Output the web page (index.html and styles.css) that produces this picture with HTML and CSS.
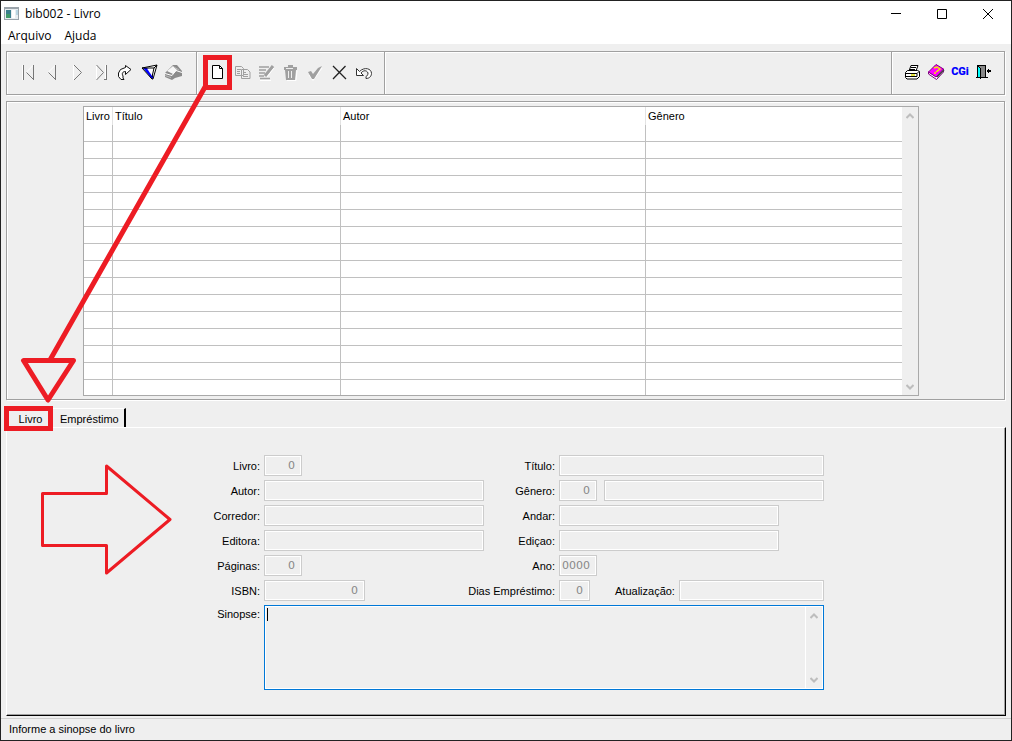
FILE: index.html
```html
<!DOCTYPE html>
<html lang="pt-BR">
<head>
<meta charset="utf-8">
<title>bib002 - Livro</title>
<link rel="stylesheet" href="styles.css">
</head>
<body>
<div class="window">
  <header class="titlebar">
    <svg class="app-icon" width="15" height="13" viewBox="0 0 15 13" shape-rendering="crispEdges"><path fill="#9aa3aa" d="M0 0h15v13H0z"/><path fill="#e8edf0" d="M1 2h13v10H1z"/><path fill="#3a7f8c" d="M2 3h5v8H2z"/><path fill="#3f9a6a" d="M2 7h4v4H2z"/><path fill="#fff" d="M8 3h3v8H8z"/><path fill="#b9d5e2" d="M12 3h2v5h-2z"/></svg>
    <h1 class="title">bib002 - Livro</h1>
    <div class="window-controls">
      <button class="control" aria-label="Minimizar"><svg width="12" height="12" viewBox="0 0 12 12"><path d="M1 5.500h10" stroke="#000" fill="none"/></svg></button>
      <button class="control" aria-label="Maximizar"><svg width="12" height="12" viewBox="0 0 12 12"><path d="M1.500 1.500h9v9h-9z" stroke="#000" fill="none"/></svg></button>
      <button class="control" aria-label="Fechar"><svg width="12" height="12" viewBox="0 0 12 12"><path d="M1 1l10 10M11 1L1 11" stroke="#000" fill="none"/></svg></button>
    </div>
  </header>
  <nav class="menubar">
    <button class="menu">Arquivo</button>
    <button class="menu">Ajuda</button>
  </nav>

  <div class="toolbar etched">
    <div class="group">
      <button class="tool" aria-label="Primeiro"><svg viewBox="0 0 24 24"><path class="w" d="M6.500 5v15M10 12.500L17.500 5"/><path class="g" d="M7.500 5v15M17.500 5v15M10.500 12.500L17.500 19.500"/></svg></button>
      <button class="tool" aria-label="Anterior"><svg viewBox="0 0 24 24"><path class="w" d="M8 12.500L15.500 5"/><path class="g" d="M15.500 5v15M8.500 12.500L15.500 19.500"/></svg></button>
      <button class="tool" aria-label="Próximo"><svg viewBox="0 0 24 24"><path class="w" d="M9.500 5v15"/><path class="g" d="M10 5l7.500 7.500L10 20"/></svg></button>
      <button class="tool" aria-label="Último"><svg viewBox="0 0 24 24"><path class="w" d="M8.500 5v15M17.500 5v15"/><path class="g" d="M8.500 5l7 7.500-7 7.500M16 19.500h3M18.500 5v15"/></svg></button>
      <button class="tool" aria-label="Ir para"><svg viewBox="0 0 24 24"><path d="M13.500 5.500l5.500 4-5.500 5v-3c-3 0-4 2-2.500 4.500v2l1 1.500H9l-2.500-3v-3.500l2-3.500 5-2z" fill="#fff" stroke="#111"/></svg></button>
      <button class="tool" aria-label="Filtrar"><svg viewBox="0 0 24 24"><path d="M6 8l15-3-4 14z" fill="#fff"/><path d="M7 8h5l5 8v3l-2-1z" fill="#00f"/><path d="M11 8.500l5 7.500 2-8z" fill="#fff"/><path d="M6 8l15-3-4 14h-1zM6 8l12 0 3-3M18 8l-2 9" stroke="#000" fill="none"/></svg></button>
      <button class="tool" aria-label="Classificar"><svg viewBox="0 0 24 24"><path fill="#8b8b8b" d="M5 13l8-8h4l5 6v5l-7 2-3 2-7-3z"/><path fill="#f6f6f6" d="M7 11l6-5 4 4-4 4z"/><path stroke="#fff" fill="none" d="M5 13.500l7 2 4-5 6 2"/><path stroke="#bbb" fill="none" d="M14 7l5 3M5 15.500l6 2"/></svg></button>
    </div>
    <div class="group edit">
      <button class="tool" aria-label="Incluir"><svg viewBox="0 0 24 24"><path d="M7.500 5.500h7l3 3v10h-10z" fill="#fff" stroke="#000"/><path d="M14.500 5.500v3h3" fill="none" stroke="#000"/></svg></button>
      <button class="tool" aria-label="Copiar"><svg viewBox="0 0 24 24"><path d="M6.500 6.500h6l2 2v7h-8zM12.500 9.500h6l2.500 2.500v6.500h-8.500z" fill="#eee" stroke="#a0a0a0"/><path stroke="#a0a0a0" d="M8 9.500h4M8 11.500h3M8 13.500h3M14 12.500h3M14 14.500h5M14 16.500h5"/></svg></button>
      <button class="tool" aria-label="Alterar"><svg viewBox="0 0 24 24"><path stroke="#a0a0a0" stroke-width="1.500" d="M6 7h10M6 10h7M6 13h6M6 16h5M7 18.500h10"/><path stroke="#a0a0a0" stroke-width="3" d="M20 6l-8 10"/><path stroke="#fff" d="M21 8l-7 9M7 20.500h11"/></svg></button>
      <button class="tool" aria-label="Excluir"><svg viewBox="0 0 24 24"><path fill="#a0a0a0" d="M7 7h4V5h5v2h4v3h-1l-1 10H9L8 10H7z"/><path stroke="#eee" fill="none" d="M9 8.500h7M11.500 11v7M14.500 11v7"/><path stroke="#fff" fill="none" d="M10 20.500h9l1-10"/></svg></button>
      <button class="tool" aria-label="Confirmar"><svg viewBox="0 0 24 24"><path d="M8 15l4 5.500L21 8" stroke="#fff" fill="none"/><path fill="#a0a0a0" d="M7 12l3-1 2 3 5-6 4-2-8 13h-2z"/></svg></button>
      <button class="tool" aria-label="Cancelar"><svg viewBox="0 0 24 24"><path d="M8 6l13 13M20.500 6L8 19" stroke="#222" stroke-width="1.300"/></svg></button>
      <button class="tool" aria-label="Desfazer"><svg viewBox="0 0 24 24"><path d="M7.500 8.500v7h7l-2.500-2.500c2-3 6-3 7 0 0 2-1 3-2 3.500v2c4 0 5.500-3 5.500-5 0-5-7-7-12-2z" fill="#fff" stroke="#333"/></svg></button>
    </div>
    <div class="group system">
      <button class="tool" aria-label="Imprimir"><svg viewBox="0 0 24 24"><path d="M9 11l2-5.500h7l-2 5.500" fill="#fff" stroke="#000"/><path d="M11 7.500h5M10 9.500h5" stroke="#000"/><path d="M5.500 12.500l2-2h10l2 1v5l-2.500 2.500h-10l-1.500-1.500z" fill="#fff" stroke="#000" /><path d="M6 13.500h11l2-2M6 16.500h11v-3" stroke="#000" fill="none"/><path d="M11 15h4" stroke="#dd0" stroke-width="1.500"/></svg></button>
      <button class="tool" aria-label="Ajuda"><svg viewBox="0 0 24 24"><path d="M4.500 14l8 5.500 7-7.500v-3l-8 7-7-4z" fill="#fff" stroke="#800080"/><path d="M4.500 12L12 4.500l7.500 4.500-7.500 8z" fill="#f0f" stroke="#800080"/><path d="M10 8l3-1 3 2-4 3" fill="none" stroke="#ee0" stroke-width="1.500"/><path d="M10 13h2" stroke="#ee0" stroke-width="1.500"/><path d="M13 17l7-7" stroke="#444" stroke-width="1.500"/></svg></button>
      <button class="tool brand" aria-label="CGi">CGi</button>
      <button class="tool" aria-label="Sair"><svg viewBox="0 0 24 24" shape-rendering="crispEdges"><path fill="#888" stroke="#000" d="M5.500 5.500h8v12h-8z"/><path fill="#0ff" stroke="#000" d="M5.500 5.500l3 3v10l-3-2z"/><path stroke="#000" d="M4 17.500h3M12 17.500h4"/><path fill="#000" d="M14 11l3-3v2h2v2h-2v2z"/></svg></button>
    </div>
  </div>

  <section class="browse etched">
    <div class="grid-box">
      <table class="books">
        <colgroup><col class="c-id"><col class="c-title"><col class="c-author"><col></colgroup>
        <thead><tr><th>Livro</th><th>Título</th><th>Autor</th><th>Gênero</th></tr></thead>
        <tbody>
          <tr><td></td><td></td><td></td><td></td></tr>
          <tr><td></td><td></td><td></td><td></td></tr>
          <tr><td></td><td></td><td></td><td></td></tr>
          <tr><td></td><td></td><td></td><td></td></tr>
          <tr><td></td><td></td><td></td><td></td></tr>
          <tr><td></td><td></td><td></td><td></td></tr>
          <tr><td></td><td></td><td></td><td></td></tr>
          <tr><td></td><td></td><td></td><td></td></tr>
          <tr><td></td><td></td><td></td><td></td></tr>
          <tr><td></td><td></td><td></td><td></td></tr>
          <tr><td></td><td></td><td></td><td></td></tr>
          <tr><td></td><td></td><td></td><td></td></tr>
          <tr><td></td><td></td><td></td><td></td></tr>
          <tr><td></td><td></td><td></td><td></td></tr>
          <tr><td></td><td></td><td></td><td></td></tr>
          <tr class="last"><td></td><td></td><td></td><td></td></tr>
        </tbody>
      </table>
      <div class="scroll">
        <svg width="8" height="6" viewBox="0 0 8 6"><path d="M.5 5L4 1.500 7.500 5"/></svg>
        <svg width="8" height="6" viewBox="0 0 8 6"><path d="M.5 1L4 4.500 7.500 1"/></svg>
      </div>
    </div>
  </section>

  <div class="tabs" role="tablist">
    <button class="tab active" role="tab" aria-selected="true">Livro</button>
    <button class="tab" role="tab" aria-selected="false">Empréstimo</button>
  </div>

  <main class="page">
    <form class="form">
      <label for="livro">Livro:</label>
      <div class="fields"><input class="field code" id="livro" value="0" disabled></div>
      <label for="titulo">Título:</label>
      <div class="fields"><input class="field wide" id="titulo" disabled></div>

      <label for="autor">Autor:</label>
      <div class="fields"><input class="field wide" id="autor" disabled></div>
      <label for="genero">Gênero:</label>
      <div class="fields split"><input class="field code" id="genero" value="0" disabled><input class="field wide" aria-label="Nome do gênero" disabled></div>

      <label for="corredor">Corredor:</label>
      <div class="fields"><input class="field wide" id="corredor" disabled></div>
      <label for="andar">Andar:</label>
      <div class="fields"><input class="field name" id="andar" disabled></div>

      <label for="editora">Editora:</label>
      <div class="fields"><input class="field wide" id="editora" disabled></div>
      <label for="edicao">Ediçao:</label>
      <div class="fields"><input class="field name" id="edicao" disabled></div>

      <label for="paginas">Páginas:</label>
      <div class="fields"><input class="field code" id="paginas" value="0" disabled></div>
      <label for="ano">Ano:</label>
      <div class="fields"><input class="field code" id="ano" value="0000" disabled></div>

      <label for="isbn">ISBN:</label>
      <div class="fields"><input class="field isbn" id="isbn" value="0" disabled></div>
      <label for="dias">Dias Empréstimo:</label>
      <div class="fields"><input class="field days" id="dias" value="0" disabled><label class="inner" for="atualizacao">Atualização:</label><input class="field date" id="atualizacao" disabled></div>

      <label class="top" for="sinopse">Sinopse:</label>
      <div class="memo">
        <textarea id="sinopse"></textarea>
        <div class="scroll">
          <svg width="8" height="6" viewBox="0 0 8 6"><path d="M.5 5L4 1.500 7.500 5"/></svg>
          <svg width="8" height="6" viewBox="0 0 8 6"><path d="M.5 1L4 4.500 7.500 1"/></svg>
        </div>
      </div>
    </form>
  </main>

  <footer class="status">Informe a sinopse do livro</footer>

  <svg class="marks" width="240" height="580" viewBox="0 0 240 580">
    <g fill="none" stroke="#ed1c24" stroke-linejoin="round">
      <path stroke-width="5" stroke-linejoin="miter" d="M205.500 57.500h24v30h-24zM6.500 408.500h44v20h-44z"/>
      <path stroke-width="5" d="M205 87L50 360M23.500 360.500h50L48 400z"/>
      <path stroke-width="3" d="M42.500 493.500h64V466L170 519.500 106.500 573v-27.500h-64z"/>
    </g>
  </svg>
</div>
</body>
</html>
```
FILE: styles.css
```css
* { box-sizing: border-box; }

body {
  margin: 0;
  font: 11px/14px "Liberation Sans", Arial, sans-serif;
  color: #000;
}

button {
  border: 0;
  padding: 0;
  background: none;
  font: inherit;
  color: inherit;
}

.window {
  position: relative;
  display: flex;
  flex-direction: column;
  min-height: 100vh;
  border: 1px solid #222;
  background: #efefef;
}

.titlebar {
  display: flex;
  align-items: center;
  height: 25px;
  padding-left: 3px;
  background: #fff;
}

.title {
  flex: 1;
  margin: 0 0 0 6px;
  font: 12px/16px "Open Sans", "Noto Sans", sans-serif;
}

.window-controls { display: flex; }

.control {
  display: flex;
  align-items: center;
  justify-content: center;
  width: 46px;
  height: 25px;
}

.menubar {
  display: flex;
  gap: 13px;
  height: 18px;
  padding-left: 7px;
  background: #fff;
  font: 12px/20px "Open Sans", "Noto Sans", sans-serif;
}

.etched {
  border: 1px solid #a0a0a0;
  box-shadow: 1px 1px 0 #fff, inset 1px 1px 0 #fff;
}

.toolbar {
  display: flex;
  height: 44px;
  margin: 7px 6px 0 5px;
}

.group {
  display: flex;
  align-items: center;
  padding: 0 12px 2px 9px;
  border-right: 1px solid #a0a0a0;
  box-shadow: 1px 0 0 #fff;
}

.group.edit { padding: 0 11px 2px 8px; }

.group.system {
  margin-left: auto;
  padding: 0 8px 2px;
  border-right: 0;
  border-left: 1px solid #a0a0a0;
  box-shadow: inset 1px 0 0 #fff;
}

.tool {
  width: 24px;
  height: 24px;
}

.tool svg {
  display: block;
  width: 24px;
  height: 24px;
}

.tool .w { fill: none; stroke: #fff; }
.tool .g { fill: none; stroke: #777; }

.brand {
  font: 900 11px/24px Roboto, "Liberation Sans", sans-serif;
  color: #00f;
}

.browse {
  margin: 6px 6px 0 5px;
  padding: 4px 85px 3px 76px;
}

.grid-box {
  display: flex;
  border: 1px solid #a9a9a9;
  background: #fff;
}

.books {
  flex: 1;
  table-layout: fixed;
  border-collapse: separate;
  border-spacing: 0;
}

.c-id { width: 29px; }
.c-title { width: 228px; }
.c-author { width: 305px; }

.books th {
  height: 18px;
  padding: 0 0 0 2px;
  border-right: 1px solid #e3e3e3;
  text-align: left;
  font-weight: normal;
  white-space: nowrap;
}

.books td {
  height: 17px;
  padding: 0;
  border-right: 1px solid #c0c0c0;
  border-bottom: 1px solid #c0c0c0;
}

.books .last td { height: 15px; border-bottom: 0; }

.books th:last-child,
.books td:last-child { border-right: 0; }

.scroll {
  display: flex;
  flex-direction: column;
  justify-content: space-between;
  align-items: center;
  width: 16px;
  padding: 6px 0 5px;
  background: #efefef;
}

.scroll path {
  fill: none;
  stroke: #bdbdbd;
  stroke-width: 2;
}

.tabs {
  display: flex;
  height: 19px;
  margin: 8px 5px 0;
}

.tab {
  padding: 0 5px 0 7px;
  border-top: 1px solid #fff;
  border-right: 2px solid #000;
  line-height: 20px;
}

.tab.active {
  width: 47px;
  border-right: 0;
}

.page {
  flex: 1;
  margin: 0 5px;
  padding: 27px 0 24px;
  border: 1px solid #fff;
  border-right: 1px solid #000;
  border-bottom: 1px solid #000;
  box-shadow: inset -1px -1px 0 #a0a0a0;
}

.form {
  display: grid;
  grid-template-columns: 72px 220px 67px 265px;
  gap: 4px;
  justify-content: center;
  align-items: center;
}

.form label {
  justify-self: end;
  white-space: nowrap;
}

.form .top {
  align-self: start;
  line-height: 18px;
}

.fields {
  display: flex;
  align-items: center;
}

.split { gap: 7px; }

.field {
  height: 21px;
  min-width: 0;
  margin: 0;
  padding: 0 6px 0 2px;
  border: 1px solid #ccc;
  border-radius: 0;
  background: #efefef;
  box-shadow: inset 0 0 0 1px #fff;
  font: 11px/14px "DejaVu Sans", sans-serif;
  color: #888;
  text-align: right;
}

.wide { flex: 1; }
.name { width: 220px; }
.code { width: 38px; }
.isbn { width: 101px; }
.days { width: 31px; }
.date { flex: 1; }

.form .inner { margin: 0 4px 0 25px; }

.memo {
  grid-column: 2 / -1;
  display: flex;
  height: 85px;
  border: 1px solid #0078d7;
  box-shadow: inset 0 0 0 1px #fff;
  padding: 1px;
}

.memo textarea {
  flex: 1;
  padding: 2px;
  border: 0;
  border-right: 1px solid #fff;
  outline: 0;
  resize: none;
  background: linear-gradient(#000, #000) 1px 1px / 1px 13px no-repeat;
  font: inherit;
}

.status {
  height: 22px;
  margin-top: 2px;
  padding-left: 8px;
  border-top: 1px solid #d0d0d0;
  line-height: 20px;
}

.marks {
  position: absolute;
  top: -1px;
  left: -1px;
  pointer-events: none;
}
```
